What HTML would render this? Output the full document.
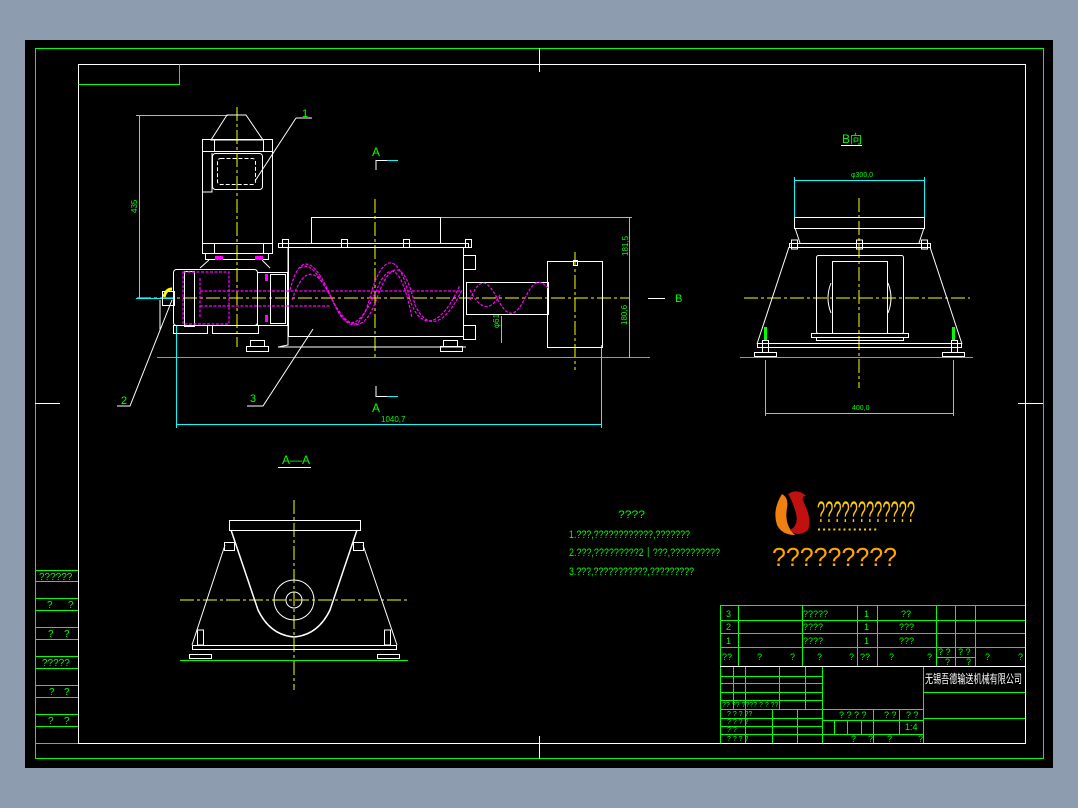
<!DOCTYPE html>
<html><head><meta charset="utf-8"><style>
html,body{margin:0;padding:0;background:#8e9cb0;width:1078px;height:808px;overflow:hidden}
svg{display:block}
text{font-family:"Liberation Sans","Noto Sans CJK SC",sans-serif}
</style></head><body>
<svg width="1078" height="808" viewBox="0 0 1078 808" xmlns="http://www.w3.org/2000/svg">
<rect x="0" y="0" width="1078" height="808" fill="#8e9cb0"/>
<rect x="25" y="40" width="1028" height="728" fill="#000"/>
<rect x="35.5" y="48.5" width="1008" height="710" fill="none" stroke="#00ff00" stroke-width="1"/>
<rect x="78.5" y="64.5" width="947" height="679" fill="none" stroke="#fff" stroke-width="1"/>
<polyline points="78.5,84.5 179.5,84.5 179.5,64.5" fill="none" stroke="#00ff00"/>
<g stroke="#fff" stroke-width="1">
<line x1="539.5" y1="48" x2="539.5" y2="72"/><line x1="539.5" y1="736" x2="539.5" y2="759"/>
<line x1="35" y1="403.5" x2="60" y2="403.5"/><line x1="1018" y1="403.5" x2="1043" y2="403.5"/>
</g>
<!-- left table -->
<g stroke="#00ff00" fill="none">
<line x1="35" y1="570.5" x2="78" y2="570.5"/><line x1="35" y1="581.5" x2="78" y2="581.5"/>
<line x1="35" y1="598.5" x2="78" y2="598.5"/><line x1="35" y1="610.5" x2="78" y2="610.5"/>
<line x1="35" y1="627.5" x2="78" y2="627.5"/><line x1="35" y1="639.5" x2="78" y2="639.5"/>
<line x1="35" y1="656.5" x2="78" y2="656.5"/><line x1="35" y1="668.5" x2="78" y2="668.5"/>
<line x1="35" y1="685.5" x2="78" y2="685.5"/><line x1="35" y1="697.5" x2="78" y2="697.5"/>
<line x1="35" y1="714.5" x2="78" y2="714.5"/><line x1="35" y1="726.5" x2="78" y2="726.5"/>
<line x1="35" y1="743.5" x2="78" y2="743.5"/>
</g>
<g fill="#00ff00" font-size="10">
<text x="39" y="580">??????</text><text x="47" y="608">?</text><text x="68" y="608">?</text>
<text x="48" y="637">?</text><text x="64" y="637">?</text><text x="42" y="666">?????</text>
<text x="49" y="695">?</text><text x="64" y="695">?</text><text x="48" y="724">?</text><text x="64" y="724">?</text>
</g>

<!-- MAIN VIEW -->
<g stroke="#ffff00" stroke-dasharray="14,3,3,3" fill="none">
<line x1="137" y1="298" x2="630" y2="298"/>
<line x1="237" y1="107" x2="237" y2="347"/>
<line x1="375" y1="199" x2="375" y2="360"/>
<line x1="575" y1="252" x2="575" y2="370"/>
</g>
<line x1="157" y1="357.5" x2="650" y2="357.5" stroke="#00ff00"/>
<g stroke="#00ffff" fill="none">
<polyline points="136,115.5 228,115.5"/><line x1="139.5" y1="115" x2="139.5" y2="298"/>
<line x1="136" y1="298.5" x2="175" y2="298.5"/>
<line x1="440" y1="217.5" x2="632" y2="217.5"/><line x1="629.5" y1="217" x2="629.5" y2="358"/>
<line x1="176.5" y1="325" x2="176.5" y2="428"/><line x1="601.5" y1="345" x2="601.5" y2="428"/>
<line x1="176" y1="424.5" x2="602" y2="424.5"/><line x1="501.5" y1="316" x2="501.5" y2="343"/>
<polyline points="387,160.5 398,160.5"/><polyline points="387,396.5 398,396.5"/>
</g>
<g fill="#00ff00" font-size="8">
<text x="128" y="210" transform="rotate(-90 134 207)">435</text>
<text x="626" y="262" transform="rotate(-90 624 258)">181,5</text>
<text x="626" y="330" transform="rotate(-90 624 327)">180,6</text>
<text x="498" y="333" transform="rotate(-90 496 330)">φ61</text>
<text x="381" y="422">1040,7</text>
</g>
<g fill="#00ff00" font-size="12"><text x="372" y="156">A</text><text x="372" y="412">A</text>
<text x="302" y="117" font-size="11">1</text><text x="121" y="404" font-size="11">2</text><text x="250" y="402" font-size="11">3</text>
<text x="675" y="302" font-size="11">B</text></g>
<g stroke="#fff" fill="none">
<polyline points="376,170 376,160.5 387,160.5"/><polyline points="376,386 376,396.5 387,396.5"/>
<polyline points="296,118 312,118"/><line x1="296" y1="118" x2="255" y2="181"/>
<polyline points="117,406 130,406 172,300"/><line x1="160" y1="300" x2="160" y2="330"/>
<polyline points="247,406 263,406 313,329"/>
<line x1="648" y1="298.5" x2="665" y2="298.5"/>
<!-- motor -->
<polygon points="227,115 246,115 263,140 211,140"/>
<rect x="202.5" y="139.5" width="70" height="114"/>
<line x1="202" y1="151.5" x2="273" y2="151.5"/><line x1="202" y1="243.5" x2="273" y2="243.5"/>
<line x1="214.5" y1="140" x2="214.5" y2="152"/><line x1="263.5" y1="140" x2="263.5" y2="152"/>
<line x1="214.5" y1="243" x2="214.5" y2="254"/><line x1="263.5" y1="243" x2="263.5" y2="254"/>
<rect x="212.5" y="153.5" width="50" height="36" rx="3"/>
<rect x="217.5" y="158.5" width="38" height="26" rx="3" stroke-dasharray="4,2"/>
<polyline points="202,192 212,192 212,153"/>
<rect x="205.5" y="253.5" width="63" height="6"/>
<polyline points="209,260 200,268"/><polyline points="262,260 270,268"/>
<!-- gearbox -->
<rect x="173.5" y="269.5" width="84" height="56" rx="3"/>
<rect x="184.5" y="271.5" width="10" height="55"/>
<rect x="173.5" y="325.5" width="34" height="8"/><rect x="212.5" y="325.5" width="46" height="8"/>
<rect x="257.5" y="272.5" width="30" height="53"/>
<rect x="270.5" y="274.5" width="15" height="49"/>
<rect x="162.5" y="291.5" width="12" height="14"/>
<!-- trough -->
<rect x="311.5" y="217.5" width="129" height="26"/>
<rect x="278.5" y="243.5" width="190" height="4"/>
<rect x="288.5" y="247.5" width="175" height="89"/>
<polyline points="288,247 288,345 278,347 466,347"/>
<rect x="463.5" y="255.5" width="12" height="14"/><rect x="463.5" y="325.5" width="12" height="14"/>
<rect x="282.5" y="239.5" width="6" height="8"/><rect x="341.5" y="239.5" width="6" height="8"/>
<rect x="403.5" y="239.5" width="6" height="8"/><rect x="465.5" y="239.5" width="6" height="8"/>
<rect x="250.5" y="340.5" width="14" height="6"/><rect x="246.5" y="346.5" width="22" height="5"/>
<rect x="443.5" y="340.5" width="14" height="6"/><rect x="440.5" y="346.5" width="22" height="5"/>
<rect x="466.5" y="282.5" width="82" height="32"/>
<rect x="547.5" y="261.5" width="55" height="86"/>
<rect x="573.5" y="260.5" width="4" height="5"/>
</g>
<path d="M164,297 Q166,289 172,289" stroke="#ffff00" stroke-width="3" fill="none"/>
<g stroke="#ff00ff" fill="none" stroke-dasharray="3,1.5" stroke-width="1.2">
<line x1="200" y1="291" x2="286" y2="291"/><line x1="200" y1="306" x2="286" y2="306"/>
<line x1="286" y1="291" x2="460" y2="291"/><line x1="286" y1="306" x2="330" y2="306"/>
<rect x="183" y="272" width="46" height="52"/>
<line x1="200" y1="278" x2="200" y2="318"/>
<path d="M290,290 C300,250 315,260 330,295 C345,330 360,340 372,290 C385,250 400,255 410,300 C420,330 440,330 460,285"/>
<path d="M292,300 C305,262 318,268 335,305 C350,330 365,335 378,295 C392,258 405,262 415,305 C428,332 445,325 462,290"/>
<path d="M300,268 C312,260 322,280 340,315 C352,330 362,325 380,282 C392,262 402,268 412,318"/>
<path d="M470,300 C480,275 488,280 498,300 C508,318 515,318 525,298 C535,278 540,280 548,288"/>
<path d="M470,290 C480,310 490,312 500,295"/>
</g>
<g fill="#ff00ff"><rect x="215" y="256" width="8" height="4"/><rect x="255" y="256" width="8" height="4"/>
<rect x="265" y="274" width="3" height="7"/><rect x="265" y="315" width="3" height="7"/></g>

<!-- B VIEW -->
<text x="842" y="143" fill="#00ff00" font-size="12">B向</text>
<line x1="841" y1="145.5" x2="862" y2="145.5" stroke="#fff"/>
<g stroke="#ffff00" stroke-dasharray="14,3,3,3" fill="none">
<line x1="744" y1="298" x2="970" y2="298"/><line x1="859" y1="198" x2="859" y2="388"/>
</g>
<line x1="740" y1="357.5" x2="973" y2="357.5" stroke="#00ff00"/>
<g stroke="#00ffff" fill="none">
<line x1="794" y1="180.5" x2="925" y2="180.5"/><line x1="794.5" y1="177" x2="794.5" y2="218"/><line x1="924.5" y1="177" x2="924.5" y2="218"/>
<line x1="765" y1="413.5" x2="953" y2="413.5"/><line x1="765.5" y1="360" x2="765.5" y2="416"/><line x1="953.5" y1="360" x2="953.5" y2="416"/>
</g>
<g fill="#00ff00" font-size="7"><text x="851" y="177">φ300,0</text><text x="852" y="410">400,0</text></g>
<g stroke="#fff" fill="none">
<rect x="794.5" y="217.5" width="130" height="11"/>
<line x1="795" y1="228" x2="800" y2="243"/><line x1="924" y1="228" x2="919" y2="243"/>
<rect x="789.5" y="243.5" width="141" height="4"/>
<line x1="789" y1="247" x2="757" y2="344"/><line x1="930" y1="247" x2="962" y2="344"/>
<rect x="816.5" y="255.5" width="87" height="78" rx="2"/>
<rect x="832.5" y="261.5" width="55" height="72"/>
<rect x="811.5" y="333.5" width="97" height="4"/><rect x="816.5" y="337.5" width="87" height="3"/>
<rect x="757.5" y="343.5" width="204" height="4"/>
<rect x="754.5" y="352.5" width="22" height="4"/><rect x="942.5" y="352.5" width="22" height="4"/>
<rect x="762.5" y="340.5" width="6" height="12"/><rect x="951.5" y="340.5" width="6" height="12"/>
<rect x="791.5" y="240" width="6" height="9"/><rect x="856.5" y="240" width="6" height="9"/><rect x="921.5" y="240" width="6" height="9"/>
<path d="M831,283 Q825,298 831,313"/><path d="M888,283 Q894,298 888,313"/>
</g>
<g fill="#00ff00"><rect x="764" y="327" width="3" height="13"/><rect x="952" y="327" width="3" height="13"/></g>

<!-- A-A VIEW -->
<text x="282" y="464" fill="#00ff00" font-size="12">A—A</text>
<line x1="278" y1="467.5" x2="311" y2="467.5" stroke="#fff"/>
<g stroke="#ffff00" stroke-dasharray="14,3,3,3" fill="none">
<line x1="180" y1="600" x2="408" y2="600"/><line x1="294" y1="500" x2="294" y2="690"/>
</g>
<line x1="180" y1="660.5" x2="408" y2="660.5" stroke="#00ff00"/>
<g stroke="#fff" fill="none">
<rect x="229.5" y="520.5" width="131" height="10"/>
<path d="M231,530 L258,610 Q270,635 294,637 Q318,635 330,610 L357,530" stroke-width="1.5"/>
<circle cx="294" cy="600" r="20"/><circle cx="294" cy="600" r="8"/>
<line x1="225" y1="545" x2="192" y2="645"/><line x1="363" y1="545" x2="397" y2="645"/>
<rect x="192.5" y="645.5" width="204" height="4"/>
<rect x="189.5" y="654.5" width="22" height="4"/><rect x="377.5" y="654.5" width="22" height="4"/>
<rect x="224.5" y="542.5" width="10" height="8"/><rect x="353.5" y="542.5" width="10" height="8"/>
<rect x="197.5" y="630" width="6" height="15"/><rect x="384.5" y="630" width="6" height="15"/>
</g>

<!-- tech text -->
<g fill="#00ff00" font-size="11">
<text x="618" y="518" textLength="27" lengthAdjust="spacingAndGlyphs">????</text>
<text x="569" y="538" textLength="121" lengthAdjust="spacingAndGlyphs">1.???,????????????,???????</text>
<text x="569" y="556" textLength="151" lengthAdjust="spacingAndGlyphs">2.???,?????????2丨???,??????????</text>
<text x="569" y="575" textLength="125" lengthAdjust="spacingAndGlyphs">3.???,???????????,?????????</text>
</g>
<!-- logo -->
<path d="M782,494 Q772,510 777,525 Q782,535 795,535 Q784,525 787,508 Q789,498 782,494Z" fill="#f08010"/>
<path d="M788,494 Q798,488 806,496 Q800,496 805,505 Q812,520 808,530 Q798,538 790,530 Q800,525 795,510 Q792,500 788,494Z" fill="#c01010"/>
<g fill="#ffcc00" font-size="30"><text x="817" y="522" textLength="98" lengthAdjust="spacingAndGlyphs">????????????</text></g>
<g fill="#ffcc00" font-size="4"><text x="818" y="530">▖ ▖ ▖ ▖ ▖ ▖ ▖ ▖ ▖ ▖ ▖ ▖</text></g>
<g fill="#ffa500" font-size="26"><text x="772" y="566" textLength="125" lengthAdjust="spacingAndGlyphs">?????????</text></g>

<!-- title block -->
<g stroke="#00ff00" fill="none">
<line x1="720" y1="605.5" x2="1025" y2="605.5"/><line x1="720" y1="620.5" x2="1025" y2="620.5"/>
<line x1="720" y1="633.5" x2="1025" y2="633.5"/><line x1="720" y1="647.5" x2="1025" y2="647.5"/>
<line x1="720.5" y1="605" x2="720.5" y2="743"/>
<line x1="738.5" y1="605" x2="738.5" y2="666"/><line x1="802.5" y1="605" x2="802.5" y2="666"/>
<line x1="857.5" y1="605" x2="857.5" y2="666"/><line x1="877.5" y1="605" x2="877.5" y2="666"/>
<line x1="936.5" y1="605" x2="936.5" y2="666"/><line x1="955.5" y1="605" x2="955.5" y2="666"/>
<line x1="975.5" y1="605" x2="975.5" y2="666"/>
<line x1="936" y1="657.5" x2="975" y2="657.5"/>
<line x1="720" y1="676.5" x2="822" y2="676.5"/><line x1="720" y1="683.5" x2="822" y2="683.5"/>
<line x1="720" y1="692.5" x2="822" y2="692.5"/><line x1="720" y1="700.5" x2="822" y2="700.5"/>
<line x1="720" y1="709.5" x2="923" y2="709.5"/><line x1="720" y1="718.5" x2="822" y2="718.5"/>
<line x1="720" y1="726.5" x2="822" y2="726.5"/><line x1="720" y1="734.5" x2="923" y2="734.5"/>
<line x1="733.5" y1="666" x2="733.5" y2="709"/><line x1="745.5" y1="666" x2="745.5" y2="743"/>
<line x1="779.5" y1="666" x2="779.5" y2="709"/><line x1="805.5" y1="666" x2="805.5" y2="709"/>
<line x1="772.5" y1="709" x2="772.5" y2="743"/><line x1="797.5" y1="709" x2="797.5" y2="743"/>
<line x1="822.5" y1="666" x2="822.5" y2="743"/>
<line x1="822" y1="720.5" x2="923" y2="720.5"/>
<line x1="834.5" y1="720" x2="834.5" y2="734"/><line x1="847.5" y1="720" x2="847.5" y2="734"/>
<line x1="861.5" y1="720" x2="861.5" y2="734"/><line x1="873.5" y1="709" x2="873.5" y2="743"/>
<line x1="899.5" y1="709" x2="899.5" y2="734"/><line x1="923.5" y1="666" x2="923.5" y2="743"/>
<line x1="923" y1="692.5" x2="1025" y2="692.5"/><line x1="923" y1="718.5" x2="1025" y2="718.5"/>
</g>
<line x1="720" y1="666.5" x2="1025" y2="666.5" stroke="#fff"/>
<g fill="#00ff00" font-size="9">
<text x="726" y="617">3</text><text x="726" y="630">2</text><text x="726" y="644">1</text>
<text x="803" y="617">?????</text><text x="803" y="630">????</text><text x="803" y="644">????</text>
<text x="864" y="617">1</text><text x="864" y="630">1</text><text x="864" y="644">1</text>
<text x="901" y="617">??</text><text x="899" y="630">???</text><text x="899" y="644">???</text>
<text x="722" y="660">??</text><text x="757" y="660">?</text><text x="790" y="660">?</text>
<text x="817" y="660">?</text><text x="849" y="660">?</text><text x="860" y="660">??</text>
<text x="889" y="660">?</text><text x="927" y="660">?</text><text x="938" y="655">? ?</text><text x="958" y="655">? ?</text>
<text x="945" y="665">?</text><text x="966" y="665">?</text><text x="985" y="660">?</text><text x="1018" y="660">?</text>
<text x="722" y="707" font-size="7">?? ?? ???? ? ? ??</text>
<text x="839" y="718">? ? ? ?</text><text x="884" y="718">? ?</text><text x="906" y="718">? ?</text>
<text x="905" y="730">1:4</text>
<text x="851" y="742">?</text><text x="868" y="742">?</text><text x="887" y="742">?</text><text x="918" y="742">?</text>
<text x="727" y="716" font-size="7">?  ?     ? ??</text><text x="727" y="724" font-size="7">?  ?     ?  ?</text>
<text x="727" y="732" font-size="7">?  ?</text><text x="727" y="741" font-size="7">?  ?     ?  ?</text>
</g>
<text x="925" y="683" fill="#fff" font-size="12" textLength="97" lengthAdjust="spacingAndGlyphs">无锡吾德输送机械有限公司</text>
</svg>
</body></html>
